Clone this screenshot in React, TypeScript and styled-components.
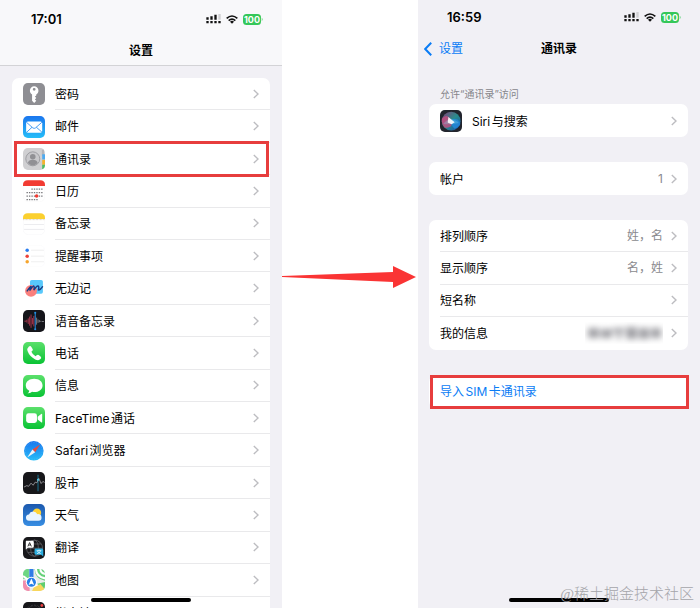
import React from "react";
import styled, { createGlobalStyle } from "styled-components";

const GlobalStyle = createGlobalStyle`
  * { box-sizing: border-box; }
  body {
    margin: 0;
    background: #fff;
    color: #000;
    font-family: Inter, "Noto Sans CJK SC", sans-serif;
    font-size: 12px;
    line-height: 18px;
    text-autospace: normal;
  }
  svg { display: block; flex: none; }
`;

const Page = styled.main`
  display: grid;
  grid-template-columns: 282fr 136fr 282fr;
  height: 100vh;
  overflow: hidden;
`;

const Phone = styled.section`
  position: relative;
  min-width: 0;
  overflow: hidden;
  background: #f1f0f5;
`;

const Header = styled.header<{ $raised?: boolean }>`
  height: ${(p) => (p.$raised ? 66 : 64)}px;
  padding-top: ${(p) => (p.$raised ? 10 : 8)}px;
  background: ${(p) => (p.$raised ? "#f8f8fa" : "transparent")};
  border-bottom: 1px solid ${(p) => (p.$raised ? "#d3d3d6" : "transparent")};
`;

const StatusBar = styled.div<{ $inset: number }>`
  display: flex;
  align-items: center;
  justify-content: space-between;
  height: 18px;
  padding: 0 19px 0 ${(p) => p.$inset}px;
`;

const Clock = styled.time`
  font-size: 13px;
  font-weight: 600;
`;

const StatusIcons = styled.div`
  display: flex;
  align-items: center;
  gap: 5px;
`;

const TitleBar = styled.div`
  display: grid;
  grid-template-columns: 1fr auto 1fr;
  align-items: center;
  height: 24px;
  margin-top: 11px;
`;

const Title = styled.h1`
  grid-column: 2;
  margin: 0;
  font-size: 12px;
  line-height: 18px;
  font-weight: 700;
`;

const BackButton = styled.button`
  display: flex;
  align-items: center;
  justify-self: start;
  gap: 7px;
  padding: 0 0 0 6px;
  border: 0;
  background: none;
  color: #0a7cf5;
  font: inherit;
`;

const Content = styled.div<{ $top: number; $left: number }>`
  display: flex;
  flex-direction: column;
  gap: 25px;
  padding: ${(p) => p.$top}px 12px 0 ${(p) => p.$left}px;
`;

const Group = styled.div`
  display: flex;
  flex-direction: column;
`;

const GroupLabel = styled.h2`
  margin: 0;
  padding: 0 11px 2px;
  color: #86868b;
  font-size: 10px;
  line-height: 16px;
  font-weight: 400;
`;

const Card = styled.ul<{ $minHeight?: number }>`
  display: flex;
  flex-direction: column;
  margin: 0;
  padding: 0;
  min-height: ${(p) => p.$minHeight ?? 33}px;
  list-style: none;
  background: #fff;
  border-radius: 7px;
`;

const Item = styled.li`
  position: relative;
  display: flex;
  flex: 1 0 auto;
`;

const RowLink = styled.a<{ $tint?: boolean }>`
  display: flex;
  flex: 1;
  align-items: center;
  gap: 10px;
  padding-left: 11px;
  color: ${(p) => (p.$tint ? "#0a7cf5" : "inherit")};
  text-decoration: none;
`;

const RowBody = styled.span<{ $line?: boolean }>`
  display: flex;
  flex: 1;
  align-self: stretch;
  align-items: center;
  justify-content: space-between;
  padding-right: 11px;
  border-bottom: ${(p) => (p.$line ? "1px solid #e9e9eb" : "0")};
`;

const Label = styled.span`
  padding-top: 2px;
`;

const Trailing = styled.span`
  display: flex;
  align-items: center;
  gap: 8px;
  color: #8a8a8e;
`;

const Highlight = styled.span<{ $wide?: boolean }>`
  position: absolute;
  inset: ${(p) => (p.$wide ? "0 -1px -1px 1px" : "-2px 1px -2px 2px")};
  border: 3px solid #e73d3d;
  pointer-events: none;
`;

const HomeIndicator = styled.div`
  position: absolute;
  left: 50%;
  bottom: 6px;
  width: 100px;
  height: 4px;
  margin-left: -50px;
  border-radius: 2px;
  background: #000;
`;

const Watermark = styled.p`
  position: absolute;
  right: 6px;
  bottom: 4px;
  margin: 0;
  color: #a5a5aa;
  font-family: "Liberation Serif", "Noto Sans CJK SC", serif;
  font-size: 15px;
  line-height: 20px;
  font-weight: 300;
`;

const Between = styled.div`
  min-width: 0;
  padding-top: 265px;

  svg { width: 100%; height: 24px; }
`;

const Chevron = () => (
  <svg width="6" height="10" viewBox="0 0 6 10" fill="none" stroke="#bdbdc1" strokeWidth="1.4">
    <path d="M.8.9 5 5 .8 9.1" />
  </svg>
);

const Status = ({ time, inset }: { time: string; inset: number }) => (
  <StatusBar $inset={inset}>
    <Clock>{time}</Clock>
    <StatusIcons>
      <svg width="15" height="10" viewBox="0 0 45 30">
        <path d="M1 21h7v7H1zM13 21h7v7h-7zM25 21h7v7h-7zM37 21h7v7h-7zM1 10h7v7H1zM13 7h7v10h-7zM25 2h7v15h-7z" fill="#111" />
        <path d="M37 0h7v17h-7z" fill="#cfcfd2" />
      </svg>
      <svg width="12" height="9" viewBox="0 0 36 27" fill="none" stroke="#111" strokeWidth="5">
        <path d="M2 10Q18-4 34 10M8 17q10-9 20 0" />
        <path d="m12 20 6 6 6-6q-6-5-12 0z" fill="#111" stroke="none" />
      </svg>
      <svg width="20" height="11" viewBox="0 0 20 11">
        <rect width="18" height="11" rx="3.5" fill="#35c759" />
        <path d="M18.8 3.8q1.4 1.7 0 3.4z" fill="#35c759" />
        <text x="9" y="9" fill="#fff" fontSize="9" fontWeight="700" textAnchor="middle" fontFamily="Inter, sans-serif">100</text>
      </svg>
    </StatusIcons>
  </StatusBar>
);

type IconName =
  | "key" | "mail" | "contacts" | "calendar" | "notes" | "reminders" | "freeform" | "voice"
  | "phone" | "messages" | "facetime" | "safari" | "stocks" | "weather" | "translate" | "maps"
  | "compass" | "siri";

const tile = (fill: string) => <rect width="63" height="63" rx="14" fill={fill} />;

const art: Record<IconName, React.ReactNode> = {
  key: (
    <>
      {tile("#8e8e93")}
      <path fillRule="evenodd" fill="#fff" d="M32 9a13 13 0 0 0-6 24v18l6 6 6-6-4-4 4-4-4-4 4-3v-3a13 13 0 0 0-6-24zm0 5a4 4 0 1 1 0 8 4 4 0 0 1 0-8z" />
    </>
  ),
  mail: (
    <>
      {tile("url(#blue)")}
      <rect x="9" y="16" width="46" height="32" rx="5" fill="#fff" />
      <path d="m10 18 18 16q4 3 8 0l18-16M11 46l15-14m28 14L38 32" fill="none" stroke="#2f91f2" strokeWidth="2.5" />
    </>
  ),
  contacts: (
    <>
      {tile("#d0d0d2")}
      <path d="M54 5h6v17h-6z" fill="#b4b4b8" />
      <path d="M55 18h8v15h-8z" fill="#4eaaf0" />
      <path d="M55 34h8v14h-8z" fill="#f3b32e" />
      <path d="M55 48h8q0 10-8 13z" fill="#4dbd63" />
      <circle cx="28" cy="31" r="20" fill="#c8c8cb" stroke="#98989c" strokeWidth="2.5" />
      <circle cx="28" cy="25" r="8" fill="#909094" />
      <path d="M14 43q2-9 14-9t14 9q-6 7-14 7t-14-7z" fill="#909094" />
    </>
  ),
  calendar: (
    <>
      <rect x="1" y="1" width="61" height="61" rx="14" fill="#fff" stroke="#f2f2f4" />
      <path d="M0 17V14Q0 1 14 1h35q14 0 14 13v3z" fill="#f23b32" />
      <path d="M24 26h32M10 36h46M10 46h46M10 56h32" stroke="#77777b" strokeWidth="3.5" strokeDasharray="4 3" />
      <circle cx="39" cy="46" r="5" fill="#f23b32" />
    </>
  ),
  notes: (
    <>
      <rect x="1" y="1" width="61" height="61" rx="14" fill="#fff" stroke="#f0f0f2" />
      <path d="M0 17V14Q0 1 14 1h35q14 0 14 13v3z" fill="#fbd02f" />
      <path d="M1 19h61" stroke="#b9aa85" strokeWidth="2" strokeDasharray="2 2" />
      <path d="M3 33h57M3 47h57" stroke="#e4e4e8" strokeWidth="2" />
    </>
  ),
  reminders: (
    <>
      <rect x="1" y="1" width="61" height="61" rx="14" fill="#fff" stroke="#f7f7f8" />
      <path d="M23 15h37M23 32h37M23 48h37" stroke="#e6e6e8" strokeWidth="2" />
      <circle cx="12" cy="15" r="5" fill="#297df0" />
      <circle cx="12" cy="32" r="5" fill="#ed4239" />
      <circle cx="12" cy="48" r="5" fill="#f6a52d" />
    </>
  ),
  freeform: (
    <>
      <rect x="20" y="6" width="37" height="39" rx="5" fill="#58c8fb" />
      <circle cx="23" cy="37" r="17" fill="#fa7f7c" />
      <path d="M12 37Q24 20 23 25t-4 11q10-14 12-13t0 12q8-13 12-12t1 11q5 2 12-9" fill="none" stroke="#173b83" strokeWidth="4" strokeLinecap="round" />
    </>
  ),
  voice: (
    <>
      {tile("#15151a")}
      <path d="M4 32h5m2-4v8m4-12v16m4-21v26m4-32v38m4-28v18m4-24v30" stroke="#b83850" strokeWidth="2.5" />
      <path d="M39 22v20m4-15v10m4-8v6m4-4v3m3-1h6" stroke="#a4a4aa" strokeWidth="2" />
      <path d="M35 7v49" stroke="#248cdf" strokeWidth="3" />
      <circle cx="35" cy="8" r="3" fill="#248cdf" />
      <circle cx="35" cy="55" r="3" fill="#248cdf" />
    </>
  ),
  phone: (
    <>
      {tile("url(#green)")}
      <path d="M17 13q4-4 7 1l4 7q1 3-2 5l-2 2q4 9 12 13l3-3q3-3 6-1l6 5q3 3-1 7-5 6-15 1Q19 42 13 26q-2-8 4-13z" fill="#fff" />
    </>
  ),
  messages: (
    <>
      {tile("url(#green)")}
      <path d="M32 11c-14 0-24 8-24 19 0 7 4 12 10 15q0 5-5 7 8 1 13-4 3 1 6 1c14 0 24-8 24-19S46 11 32 11z" fill="#fff" />
    </>
  ),
  facetime: (
    <>
      {tile("url(#green)")}
      <rect x="9" y="18" width="31" height="28" rx="7" fill="#fff" />
      <path d="m42 28 10-8q3-2 3 2v20q0 4-3 2l-10-8z" fill="#fff" />
    </>
  ),
  safari: (
    <>
      <circle cx="31" cy="31" r="28" fill="url(#blue)" />
      <circle cx="31" cy="31" r="24" fill="none" stroke="#7cc8fb" strokeWidth="2" strokeDasharray="1 4" />
      <path d="m49 13-14 22-8-8z" fill="#e64b42" />
      <path d="m12 50 15-23 8 8z" fill="#eef3f8" />
    </>
  ),
  stocks: (
    <>
      {tile("#17171a")}
      <path d="M43 8v47" stroke="#1d708c" strokeWidth="3" />
      <path d="m3 43 8-4 5 2 7-9 6 6 6-9 5 2 5-13 7 15 5-6 5 3" fill="none" stroke="#9a9a9e" strokeWidth="2.5" />
      <circle cx="43" cy="22" r="3" fill="#4ac8e6" />
    </>
  ),
  weather: (
    <>
      {tile("url(#sky)")}
      <circle cx="40" cy="25" r="12" fill="#ffd234" />
      <path d="M18 48a9 9 0 0 1-1-18 13 13 0 0 1 24-1q10-1 12 8 1 11-9 11z" fill="#eaf5ff" />
    </>
  ),
  translate: (
    <>
      {tile("#18181b")}
      <g fill="none" stroke="#68686d" strokeWidth="2">
        <circle cx="33" cy="32" r="23" />
        <ellipse cx="33" cy="32" rx="11" ry="23" />
        <path d="M10 32h46M14 20h38M14 44h38" />
      </g>
      <path d="M9 11h18q4 0 4 4v12q0 4-4 4H14l-6 5V15q0-4 1-4z" fill="#fff" />
      <path d="m14 27 5-11 5 11m-8-4h6" fill="none" stroke="#222" strokeWidth="2.5" />
      <path d="M37 33h17q4 0 4 4v19l-6-5H37q-4 0-4-4V37q0-4 4-4z" fill="#2badde" />
      <path d="M39 39h13m-6-3v3m5 0q-3 7-11 9m1-8q4 6 10 8" stroke="#fff" strokeWidth="2" fill="none" />
    </>
  ),
  maps: (
    <g clipPath="url(#tile)">
      <path d="M0 0h63v63H0z" fill="#e9ecea" />
      <path d="M33 0h30v34Q35 29 33 0z" fill="#67d17a" />
      <path d="M0 33h19v30H0z" fill="#f18dac" />
      <path d="m41 42 22 21V37z" fill="#60cd70" />
      <path d="M0 0h17v28H0z" fill="#6dd683" />
      <path d="m0 20 60 43M37 0q1 22 26 27M50 0q0 12 13 14" fill="none" stroke="#fff" strokeWidth="6" />
      <path d="M18 0h12v27H18z" fill="#307ce7" />
      <path d="m30 54 20-11 13 16v4H26z" fill="#f8d65c" />
      <circle cx="24" cy="38" r="16" fill="#fff" />
      <circle cx="24" cy="38" r="13" fill="#277fe8" />
      <path d="m24 27 8 19-8-4-8 4z" fill="#fff" />
    </g>
  ),
  compass: (
    <>
      {tile("#17171a")}
      <circle cx="32" cy="34" r="24" fill="none" stroke="#5c5c60" strokeWidth="5" strokeDasharray="1 3" />
      <circle cx="54" cy="10" r="4" fill="#ed3f3f" />
    </>
  ),
  siri: (
    <>
      {tile("#22242d")}
      <circle cx="32" cy="32" r="27" fill="url(#siri)" />
      <path d="M5 25Q20 8 31 29T14 51Q4 41 5 25z" fill="#d7477f" opacity=".72" />
      <path d="M31 27Q49 21 56 33T42 54Q29 42 31 27z" fill="#248be2" opacity=".75" />
      <path d="M9 40Q28 14 54 37 28 42 9 40z" fill="#85d8ef" opacity=".3" />
      <path d="m24 20 18 15-9 6-11-5z" fill="#fff" opacity=".9" />
    </>
  ),
};

const AppIcon = ({ name }: { name: IconName }) => (
  <svg width="22" height="22" viewBox="0 0 63 63" aria-hidden="true">{art[name]}</svg>
);

const GradientStore = styled.svg`
  position: absolute;
`;

const Gradients = () => (
  <GradientStore width="0" height="0" aria-hidden="true">
    <defs>
      <linearGradient id="blue" x2="0" y2="1"><stop stopColor="#1b76ee" /><stop offset="1" stopColor="#25bdf8" /></linearGradient>
      <linearGradient id="green" x2="0" y2="1"><stop stopColor="#5be06b" /><stop offset="1" stopColor="#09c334" /></linearGradient>
      <linearGradient id="sky" x2="0" y2="1"><stop stopColor="#1c59ae" /><stop offset="1" stopColor="#388ee3" /></linearGradient>
      <linearGradient id="siri" x2="1" y2="1"><stop stopColor="#883b78" /><stop offset=".5" stopColor="#298c8b" /><stop offset="1" stopColor="#174db0" /></linearGradient>
      <clipPath id="tile"><rect width="63" height="63" rx="14" /></clipPath>
      <filter id="soft" x="-20%" y="-60%" width="140%" height="220%"><feGaussianBlur stdDeviation="3" /></filter>
    </defs>
  </GradientStore>
);

const HiddenName = () => (
  <svg width="78" height="22" viewBox="0 0 78 22" role="img" aria-label="已隐藏">
    <g filter="url(#soft)" fill="#a0a0a5">
      <path d="M3 6h11v10H3zM16 7h11v9H16zM28 6h11v4H28zM32 8h4v9h-4zM41 5h11v12H41zM54 6h10v11H54zM66 6h10v10H66z" />
    </g>
  </svg>
);

interface RowProps {
  label: string;
  icon?: IconName;
  value?: React.ReactNode;
  line?: boolean;
  highlighted?: boolean;
}

const Row = ({ label, icon, value, line, highlighted }: RowProps) => (
  <Item>
    <RowLink href="#">
      {icon && <AppIcon name={icon} />}
      <RowBody $line={line}>
        <Label>{label}</Label>
        <Trailing>{value}<Chevron /></Trailing>
      </RowBody>
    </RowLink>
    {highlighted && <Highlight />}
  </Item>
);

const settings: [string, IconName][] = [
  ["密码", "key"], ["邮件", "mail"], ["通讯录", "contacts"], ["日历", "calendar"],
  ["备忘录", "notes"], ["提醒事项", "reminders"], ["无边记", "freeform"],
  ["语音备忘录", "voice"], ["电话", "phone"], ["信息", "messages"],
  ["FaceTime通话", "facetime"], ["Safari浏览器", "safari"], ["股市", "stocks"],
  ["天气", "weather"], ["翻译", "translate"], ["地图", "maps"], ["指南针", "compass"],
];

export default function App() {
  return (
    <>
      <GlobalStyle />
      <Gradients />
      <Page>
        <Phone>
          <Header $raised>
            <Status time="17:01" inset={31} />
            <TitleBar><Title>设置</Title></TitleBar>
          </Header>
          <Content $top={12} $left={12}>
            <Card $minHeight={551}>
              {settings.map(([label, icon], i) => (
                <Row key={label} label={label} icon={icon} line={i < settings.length - 1} highlighted={icon === "contacts"} />
              ))}
            </Card>
          </Content>
          <HomeIndicator />
        </Phone>
        <Between>
          <svg viewBox="0 0 136 24" preserveAspectRatio="none" role="img" aria-label="下一步">
            <path d="M0 11 111 7V1l23 11-23 11v-6L0 12z" fill="#fa3434" />
          </svg>
        </Between>
        <Phone>
          <Header>
            <Status time="16:59" inset={29} />
            <TitleBar>
              <BackButton type="button">
                <svg width="8" height="14" viewBox="0 0 8 14" fill="none" stroke="currentColor" strokeWidth="2">
                  <path d="M7.2.8 1.2 7l6 6.2" />
                </svg>
                设置
              </BackButton>
              <Title>通讯录</Title>
            </TitleBar>
          </Header>
          <Content $top={22} $left={11}>
            <Group>
              <GroupLabel>允许“通讯录”访问</GroupLabel>
              <Card><Row label="Siri与搜索" icon="siri" /></Card>
            </Group>
            <Card><Row label="帐户" value="1" /></Card>
            <Card $minHeight={130}>
              <Row label="排列顺序" value="姓，名" line />
              <Row label="显示顺序" value="名，姓" line />
              <Row label="短名称" line />
              <Row label="我的信息" value={<HiddenName />} />
            </Card>
            <Card>
              <Item>
                <RowLink href="#" $tint>导入SIM卡通讯录</RowLink>
                <Highlight $wide />
              </Item>
            </Card>
          </Content>
          <HomeIndicator />
          <Watermark>@稀土掘金技术社区</Watermark>
        </Phone>
      </Page>
    </>
  );
}
